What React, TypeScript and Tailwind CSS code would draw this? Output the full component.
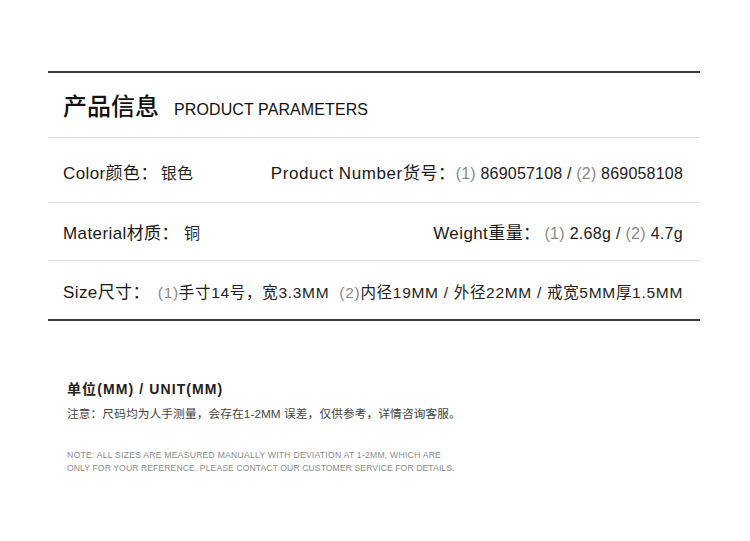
import React from "react";

const font = { fontFamily: '"Liberation Sans", "Noto Sans CJK SC", sans-serif' };

function P({ children }: { children: React.ReactNode }) {
  return <span className="text-[#8a8a8a]">{children}</span>;
}

export default function App() {
  return (
    <div className="w-[750px] h-[541px] bg-white" style={font}>
      <div className="pt-[71px] pl-[48px] w-[700px]">
        <div className="border-t-2 border-[#3c3c3c]">
          <div className="h-[65px] flex items-end pb-[18px] pl-[15px] border-b border-[#e2e2e2]">
            <span className="text-[24px] leading-none text-[#111] font-medium">产品信息</span>
            <span className="ml-[15px] text-[16px] tracking-[0.1px] leading-none text-[#111] mb-[1px]">PRODUCT PARAMETERS</span>
          </div>
          <div className="h-[65px] flex items-center justify-between pl-[15px] pr-[17px] pt-[8px] border-b border-[#e2e2e2] text-[#1a1a1a] tracking-[0.4px]">
            <div className="flex items-center">
              <span className="text-[17px]">Color颜色：</span>
              <span className="ml-[3px] text-[16px] tracking-[0.2px] text-[#222]">银色</span>
            </div>
            <div className="flex items-center">
              <span className="text-[17px] tracking-[0.6px]">Product Number货号：</span>
              <span className="text-[16px] tracking-[0.2px] text-[#222]"><P>(1)</P> 869057108 / <P>(2)</P> 869058108</span>
            </div>
          </div>
          <div className="h-[58px] flex items-center justify-between pl-[15px] pr-[17px] pt-[4px] border-b border-[#e2e2e2] text-[#1a1a1a] tracking-[0.4px]">
            <div className="flex items-center">
              <span className="text-[17px]">Material材质：</span>
              <span className="ml-[5px] text-[16px] text-[#222]">铜</span>
            </div>
            <div className="flex items-center">
              <span className="text-[17px]">Weight重量：</span>
              <span className="ml-[4px] text-[16px] tracking-[0.3px] text-[#222]"><P>(1)</P> 2.68g / <P>(2)</P> 4.7g</span>
            </div>
          </div>
          <div className="h-[60px] flex items-center justify-between pl-[15px] pr-[17px] pt-[6px] border-b-2 border-[#3c3c3c] text-[#1a1a1a]">
            <span className="text-[17px] tracking-[0.4px]">Size尺寸：</span>
            <span className="text-[15.5px] tracking-[0.7px] text-[#222]"><P>(1)</P>手寸14号，宽3.3MM&nbsp;&nbsp;<P>(2)</P>内径19MM / 外径22MM / 戒宽5MM厚1.5MM</span>
          </div>
        </div>
      </div>
      <div className="pl-[67px] pt-[59px]">
        <div className="text-[14px] font-bold text-[#222] leading-[18px] tracking-[1.1px]">单位(MM) / UNIT(MM)</div>
        <div className="mt-[8px] text-[11.7px] tracking-[0.1px] text-[#444] leading-[16px]">注意：尺码均为人手测量，会存在1-2MM 误差，仅供参考，详情咨询客服。</div>
        <div className="mt-[27px] text-[8.6px] tracking-[0.18px] text-[#8a8a8a] leading-[13px]">
          <div className="tracking-[0.25px]">NOTE: ALL SIZES ARE MEASURED MANUALLY WITH DEVIATION AT 1-2MM, WHICH ARE</div>
          <div className="tracking-[0.1px]">ONLY FOR YOUR REFERENCE. PLEASE CONTACT OUR CUSTOMER SERVICE FOR DETAILS.</div>
        </div>
      </div>
    </div>
  );
}
